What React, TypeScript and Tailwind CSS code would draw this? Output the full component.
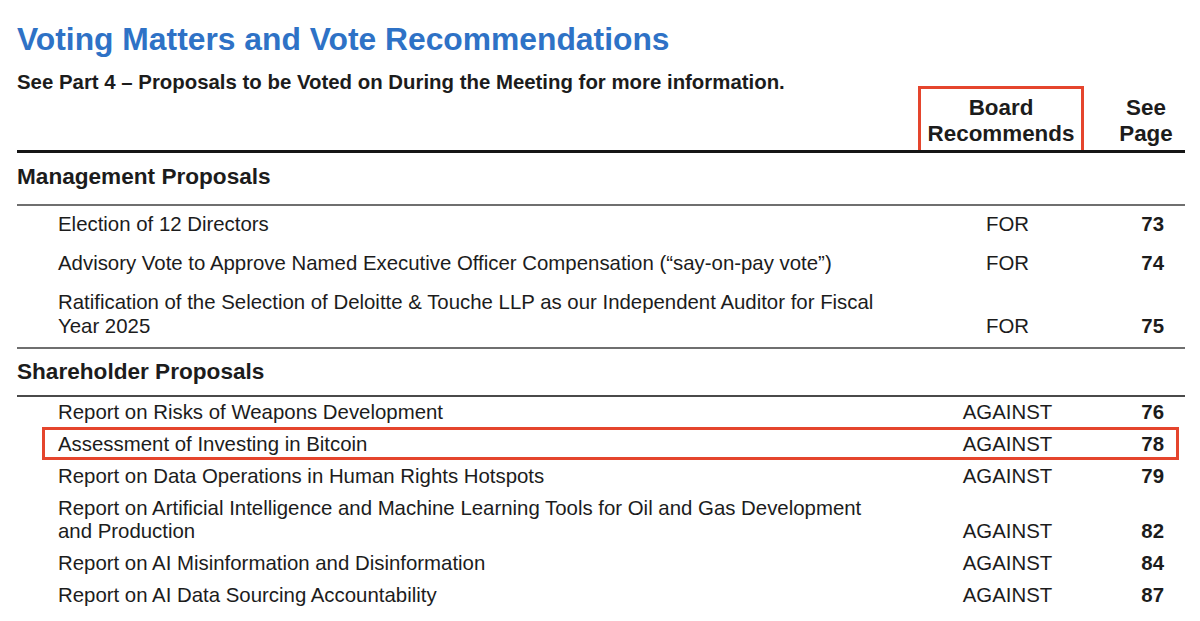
const management = [
  { text: "Election of 12 Directors", rec: "FOR", page: "73" },
  {
    text: "Advisory Vote to Approve Named Executive Officer Compensation (\u201csay-on-pay vote\u201d)",
    rec: "FOR",
    page: "74",
  },
  {
    text: "Ratification of the Selection of Deloitte & Touche LLP as our Independent Auditor for Fiscal Year 2025",
    rec: "FOR",
    page: "75",
  },
];

const shareholder = [
  { text: "Report on Risks of Weapons Development", rec: "AGAINST", page: "76" },
  { text: "Assessment of Investing in Bitcoin", rec: "AGAINST", page: "78", marked: true },
  { text: "Report on Data Operations in Human Rights Hotspots", rec: "AGAINST", page: "79" },
  {
    text: "Report on Artificial Intelligence and Machine Learning Tools for Oil and Gas Development and Production",
    rec: "AGAINST",
    page: "82",
  },
  { text: "Report on AI Misinformation and Disinformation", rec: "AGAINST", page: "84" },
  { text: "Report on AI Data Sourcing Accountability", rec: "AGAINST", page: "87" },
];

type Row = { text: string; rec: string; page: string; marked?: boolean };

const ProposalRow = ({ row, tight }: { row: Row; tight?: boolean }) => (
  <div
    className={`relative flex items-end pl-[41px] pr-[21px] ${
      tight ? "pt-[2px] pb-[7px] leading-[23px]" : "pt-[6px] pb-[9px] leading-[24px]"
    }`}
  >
    {row.marked && (
      <span className="pointer-events-none absolute left-[25px] right-[6px] top-[-4px] bottom-[3px] border-[3px] border-[#e5452d]" />
    )}
    <div className="flex-1 min-w-0 pr-[30px]">{row.text}</div>
    <div className="w-[185px] text-center">{row.rec}</div>
    <div className="w-[64px] text-right font-bold">{row.page}</div>
  </div>
);

export default function App() {
  return (
    <div
      className="w-[1200px] h-[621px] bg-white text-[#1c1c1c] overflow-hidden"
      style={{ fontFamily: '"Liberation Sans", Arial, Helvetica, sans-serif' }}
    >
      <div className="pl-[17px] pr-[15px]">
        <h1 className="pt-[21px] text-[31.8px] leading-[36px] font-bold text-[#2e72c6]">
          Voting Matters and Vote Recommendations
        </h1>
        <p className="mt-[13px] text-[20.4px] leading-[24px] font-bold">
          See Part 4 – Proposals to be Voted on During the Meeting for more information.
        </p>

        <div className="flex justify-end items-end border-b-[3px] border-[#151515] -mt-[8px]">
          <div className="w-[166px] border-[3px] border-b-0 border-[#e5452d] pt-[6px] pb-[3px] text-center text-[22.4px] leading-[26px] font-bold">
            Board
            <br />
            Recommends
          </div>
          <div className="w-[78px] ml-[23px] pb-[3px] text-center text-[22.4px] leading-[26px] font-bold">
            See
            <br />
            Page
          </div>
        </div>

        <div className="text-[20.4px]">
          <h2 className="pt-[11px] pb-[14px] text-[22.6px] leading-[26px] font-bold border-b-2 border-[#6f6f6f]">
            Management Proposals
          </h2>
          <div className="border-b-2 border-[#6f6f6f]">
            {management.map((row) => (
              <ProposalRow key={row.page} row={row} />
            ))}
          </div>

          <h2 className="pt-[10px] pb-[10px] text-[22.6px] leading-[26px] font-bold border-b-2 border-[#4a4a4a]">
            Shareholder Proposals
          </h2>
          <div className="pt-[2px]">
            {shareholder.map((row) => (
              <ProposalRow key={row.page} row={row} tight />
            ))}
          </div>
        </div>
      </div>
    </div>
  );
}
